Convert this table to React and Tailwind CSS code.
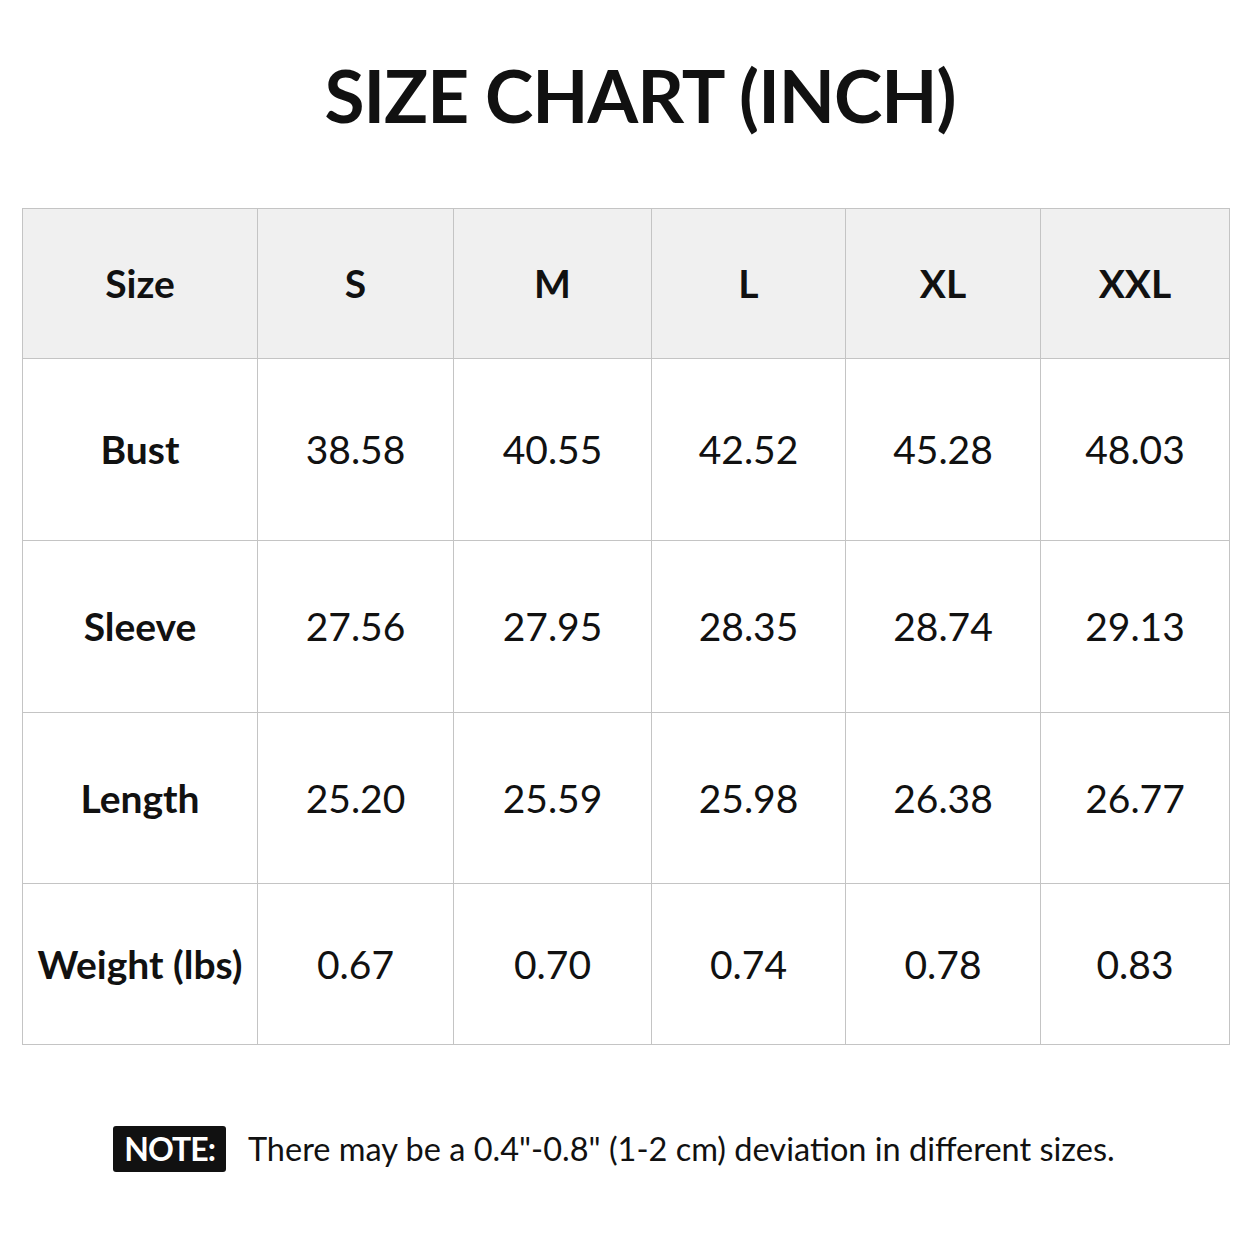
import React from 'react'

const SIZES = ['S', 'M', 'L', 'XL', 'XXL']
const COLS = ['w-[235px]', 'w-[196px]', 'w-[198px]', 'w-[194px]', 'w-[195px]', 'w-[189px]']

const ROWS = [
  { label: 'Bust', h: 'h-[182px]', values: ['38.58', '40.55', '42.52', '45.28', '48.03'] },
  { label: 'Sleeve', h: 'h-[172px]', values: ['27.56', '27.95', '28.35', '28.74', '29.13'] },
  { label: 'Length', h: 'h-[171px]', values: ['25.20', '25.59', '25.98', '26.38', '26.77'] },
  { label: 'Weight (lbs)', h: 'h-[161px]', values: ['0.67', '0.70', '0.74', '0.78', '0.83'] },
]

export default function App() {
  return (
    <div className="w-[1254px] h-[1254px] bg-white text-[#111] flex flex-col items-center"
      style={{ fontFamily: 'Lato, "Noto Sans", sans-serif' }}>

      {/* Title */}
      <h1 className="mt-[50px] ml-[26px] text-[73px] font-bold leading-[90px] tracking-[-1px]">SIZE CHART (INCH)</h1>

      {/* Table */}
      <table className="mt-[68px] ml-[-2px] border-collapse border border-[#c4c4c4] table-fixed">
        <thead>
          <tr className="h-[150px] bg-[#f0f0f0]">
            <th className={`${COLS[0]} border border-[#c4c4c4] text-[39px] font-bold`}>Size</th>
            {SIZES.map((s, i) => (
              <th key={s} className={`${COLS[i + 1]} border border-[#c4c4c4] text-[39px] font-bold`}>{s}</th>
            ))}
          </tr>
        </thead>
        <tbody>
          {ROWS.map(r => (
            <tr key={r.label} className={r.h}>
              <td className="border border-[#c4c4c4] text-center text-[39px] font-bold whitespace-nowrap">{r.label}</td>
              {r.values.map((v, i) => (
                <td key={i} className="border border-[#c4c4c4] text-center text-[39px]">{v}</td>
              ))}
            </tr>
          ))}
        </tbody>
      </table>

      {/* Note */}
      <div className="mt-[80px] flex items-center gap-[22px] ml-[-26px]">
        <span className="bg-[#111] text-white font-bold text-[32px] leading-none px-[11px] py-[7px] rounded-[3px] tracking-[-1px]">NOTE:</span>
        <span className="text-[32.5px]">There may be a 0.4"-0.8" (1-2 cm) deviation in different sizes.</span>
      </div>
    </div>
  )
}
